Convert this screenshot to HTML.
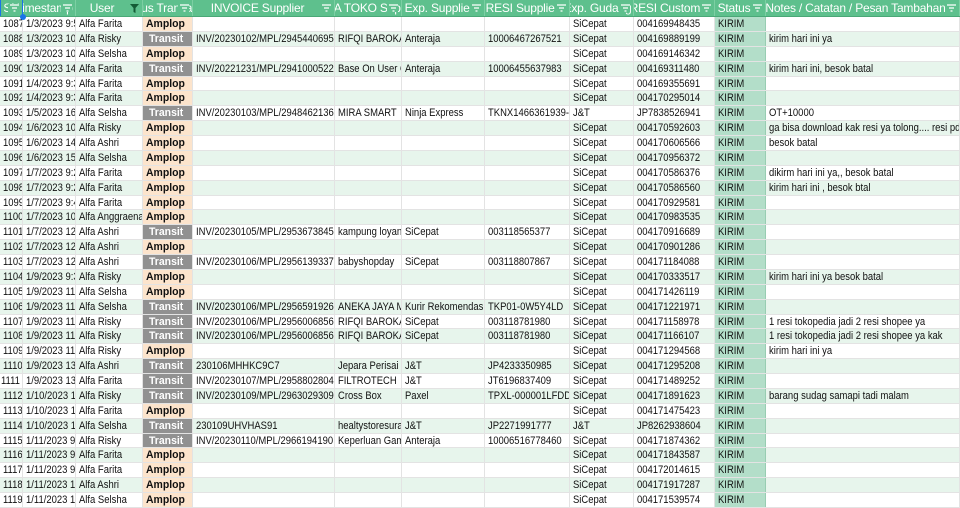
<!DOCTYPE html>
<html><head><meta charset="utf-8"><style>
body{margin:0;width:960px;height:508px;overflow:hidden;background:#fff;font-family:"Liberation Sans",Arial,sans-serif}
.h{display:flex;height:17px;background:#5ec08d;border-bottom:1px solid #4aa877;box-sizing:border-box}
.h div{position:relative;overflow:hidden;white-space:nowrap;display:flex;justify-content:center;align-items:center;color:#fff;font-size:12px;letter-spacing:-0.2px;border-right:1px solid #7ccfa3;box-sizing:border-box}
.h svg{position:absolute;right:3px;top:4px;background:#5ec08d;padding-left:2px}
.r{display:flex;height:14.88px;box-sizing:border-box;border-bottom:1px solid #e3e3e3}
.r.g{background:#e7f5ec}
.r div{overflow:hidden;white-space:nowrap;padding-left:3px;border-right:1px solid #e3e3e3;box-sizing:border-box;font-size:11px;line-height:14px;color:#111}
.r div span{display:inline-block;transform:scaleX(.86);transform-origin:0 0}
.r div.A span,.r div.T span{transform:scaleX(.95)}
.A{background:#fce4cc;font-weight:bold}
.T{background:#919191;color:#fff!important;font-weight:bold;padding-left:6px!important}
.S{background:#b3dec9;border-right:1px solid #98cdb2!important}
.w0{width:23px}.w1{width:53px}.w2{width:67px}.w3{width:50px}.w4{width:142px}.w5{width:67px}.w6{width:83px}.w7{width:85px}.w8{width:64px}.w9{width:81px}.w10{width:51px}.w11{width:194px}
</style></head><body>
<div class="h">
<div class="w0" style="border-right:1px solid #1a73e8;border-left:1px solid #1a73e8;overflow:visible">SN<svg width="9" height="8" viewBox="0 0 9 8"><path d="M0 1H9M2 4H7M3.5 7H5.5" stroke="#fff" stroke-width="1.2"/></svg><span style="position:absolute;right:-4px;bottom:-4px;width:6px;height:6px;border-radius:50%;background:#1a73e8"></span></div>
<div class="w1"><span style="margin-right:10px">Timestamp</span><svg width="9" height="8" viewBox="0 0 9 8"><path d="M0 1H9M2 4H7M3.5 7H5.5" stroke="#fff" stroke-width="1.2"/></svg></div>
<div class="w2"><span style="margin-right:14px">User</span><svg width="9" height="9" viewBox="0 0 9 9"><path d="M0 0H9L5.5 4V9L3.5 8V4Z" fill="#145c36"/></svg></div>
<div class="w3"><span style="margin-right:8px">Status Transaksi</span><svg width="9" height="8" viewBox="0 0 9 8"><path d="M0 1H9M2 4H7M3.5 7H5.5" stroke="#fff" stroke-width="1.2"/></svg></div>
<div class="w4"><span style="margin-right:12px">INVOICE Supplier</span><svg width="9" height="8" viewBox="0 0 9 8"><path d="M0 1H9M2 4H7M3.5 7H5.5" stroke="#fff" stroke-width="1.2"/></svg></div>
<div class="w5"><span style="margin-right:6px">NAMA TOKO Supplier</span><svg width="9" height="8" viewBox="0 0 9 8"><path d="M0 1H9M2 4H7M3.5 7H5.5" stroke="#fff" stroke-width="1.2"/></svg></div>
<div class="w6"><span style="margin-right:8px">Exp. Supplier</span><svg width="9" height="8" viewBox="0 0 9 8"><path d="M0 1H9M2 4H7M3.5 7H5.5" stroke="#fff" stroke-width="1.2"/></svg></div>
<div class="w7"><span style="margin-right:10px">RESI Supplier</span><svg width="9" height="8" viewBox="0 0 9 8"><path d="M0 1H9M2 4H7M3.5 7H5.5" stroke="#fff" stroke-width="1.2"/></svg></div>
<div class="w8"><span style="margin-right:8px">Exp. Gudang</span><svg width="9" height="8" viewBox="0 0 9 8"><path d="M0 1H9M2 4H7M3.5 7H5.5" stroke="#fff" stroke-width="1.2"/></svg></div>
<div class="w9"><span style="margin-right:8px">RESI Customer</span><svg width="9" height="8" viewBox="0 0 9 8"><path d="M0 1H9M2 4H7M3.5 7H5.5" stroke="#fff" stroke-width="1.2"/></svg></div>
<div class="w10"><span style="margin-right:12px">Status</span><svg width="9" height="8" viewBox="0 0 9 8"><path d="M0 1H9M2 4H7M3.5 7H5.5" stroke="#fff" stroke-width="1.2"/></svg></div>
<div class="w11"><span style="margin-right:14px">Notes / Catatan / Pesan Tambahan</span><svg width="9" height="8" viewBox="0 0 9 8"><path d="M0 1H9M2 4H7M3.5 7H5.5" stroke="#fff" stroke-width="1.2"/></svg></div>
</div>
<div id="b"></div>
<script>
var d=[
["1087","1/3/2023 9:5","Alfa Farita","A","","","","","SiCepat","004169948435",""],
["1088","1/3/2023 10","Alfa Risky","T","INV/20230102/MPL/2945440695","RIFQI BAROKAH","Anteraja","10006467267521","SiCepat","004169889199","kirim hari ini ya"],
["1089","1/3/2023 10","Alfa Selsha","A","","","","","SiCepat","004169146342",""],
["1090","1/3/2023 14","Alfa Farita","T","INV/20221231/MPL/2941000522","Base On User Official","Anteraja","10006455637983","SiCepat","004169311480","kirim hari ini, besok batal"],
["1091","1/4/2023 9:3","Alfa Farita","A","","","","","SiCepat","004169355691",""],
["1092","1/4/2023 9:3","Alfa Farita","A","","","","","SiCepat","004170295014",""],
["1093","1/5/2023 16","Alfa Selsha","T","INV/20230103/MPL/2948462136","MIRA SMART","Ninja Express","TKNX1466361939-01","J&T","JP7838526941","OT+10000"],
["1094","1/6/2023 10","Alfa Risky","A","","","","","SiCepat","004170592603","ga bisa download kak resi ya tolong.... resi pdf"],
["1095","1/6/2023 14","Alfa Ashri","A","","","","","SiCepat","004170606566","besok batal"],
["1096","1/6/2023 15","Alfa Selsha","A","","","","","SiCepat","004170956372",""],
["1097","1/7/2023 9:2","Alfa Farita","A","","","","","SiCepat","004170586376","dikirm hari ini ya,, besok batal"],
["1098","1/7/2023 9:2","Alfa Farita","A","","","","","SiCepat","004170586560","kirim hari ini , besok btal"],
["1099","1/7/2023 9:4","Alfa Farita","A","","","","","SiCepat","004170929581",""],
["1100","1/7/2023 10","Alfa Anggraena","A","","","","","SiCepat","004170983535",""],
["1101","1/7/2023 12","Alfa Ashri","T","INV/20230105/MPL/2953673845","kampung loyan","SiCepat","003118565377","SiCepat","004170916689",""],
["1102","1/7/2023 12","Alfa Ashri","A","","","","","SiCepat","004170901286",""],
["1103","1/7/2023 12","Alfa Ashri","T","INV/20230106/MPL/2956139337","babyshopday","SiCepat","003118807867","SiCepat","004171184088",""],
["1104","1/9/2023 9:3","Alfa Risky","A","","","","","SiCepat","004170333517","kirim hari ini ya besok batal"],
["1105","1/9/2023 11","Alfa Selsha","A","","","","","SiCepat","004171426119",""],
["1106","1/9/2023 11","Alfa Selsha","T","INV/20230106/MPL/2956591926","ANEKA JAYA MAKMUR","Kurir Rekomendasi","TKP01-0W5Y4LD","SiCepat","004171221971",""],
["1107","1/9/2023 11","Alfa Risky","T","INV/20230106/MPL/2956006856","RIFQI BAROKAH","SiCepat","003118781980","SiCepat","004171158978","1 resi tokopedia jadi 2 resi shopee ya"],
["1108","1/9/2023 11","Alfa Risky","T","INV/20230106/MPL/2956006856","RIFQI BAROKAH","SiCepat","003118781980","SiCepat","004171166107","1 resi tokopedia jadi 2 resi shopee ya kak"],
["1109","1/9/2023 11","Alfa Risky","A","","","","","SiCepat","004171294568","kirim hari ini ya"],
["1110","1/9/2023 13","Alfa Ashri","T","230106MHHKC9C7","Jepara Perisai","J&T","JP4233350985","SiCepat","004171295208",""],
["1111","1/9/2023 13","Alfa Farita","T","INV/20230107/MPL/2958802804","FILTROTECH","J&T","JT6196837409","SiCepat","004171489252",""],
["1112","1/10/2023 1","Alfa Risky","T","INV/20230109/MPL/2963029309","Cross Box","Paxel","TPXL-000001LFDD","SiCepat","004171891623","barang sudag samapi tadi malam"],
["1113","1/10/2023 1","Alfa Farita","A","","","","","SiCepat","004171475423",""],
["1114","1/10/2023 1","Alfa Selsha","T","230109UHVHAS91","healtystoresurabaya","J&T","JP2271991777","J&T","JP8262938604",""],
["1115","1/11/2023 9","Alfa Risky","T","INV/20230110/MPL/2966194190","Keperluan Gamis","Anteraja","10006516778460","SiCepat","004171874362",""],
["1116","1/11/2023 9","Alfa Farita","A","","","","","SiCepat","004171843587",""],
["1117","1/11/2023 9","Alfa Farita","A","","","","","SiCepat","004172014615",""],
["1118","1/11/2023 1","Alfa Ashri","A","","","","","SiCepat","004171917287",""],
["1119","1/11/2023 1","Alfa Selsha","A","","","","","SiCepat","004171539574",""]];
var h="";
d.forEach(function(r,i){
h+='<div class="r'+(i%2?' g':'')+'">';
var s=r[3]=="A"?"Amplop":"Transit";
var c=[r[0],r[1],r[2],s,r[4],r[5],r[6],r[7],r[8],r[9],"KIRIM",r[10]];
c.forEach(function(v,j){
var cls="w"+j;
if(j==3)cls+=" "+r[3];
if(j==10)cls+=" S";
var st=(j==0&&r[0]=="1111")?' style="padding-left:1px"':'';
h+='<div class="'+cls+'"'+st+'><span>'+v.replace(/&/g,"&amp;")+'</span></div>';
});
h+='</div>';
});
document.getElementById("b").innerHTML=h;
</script>
</body></html>
